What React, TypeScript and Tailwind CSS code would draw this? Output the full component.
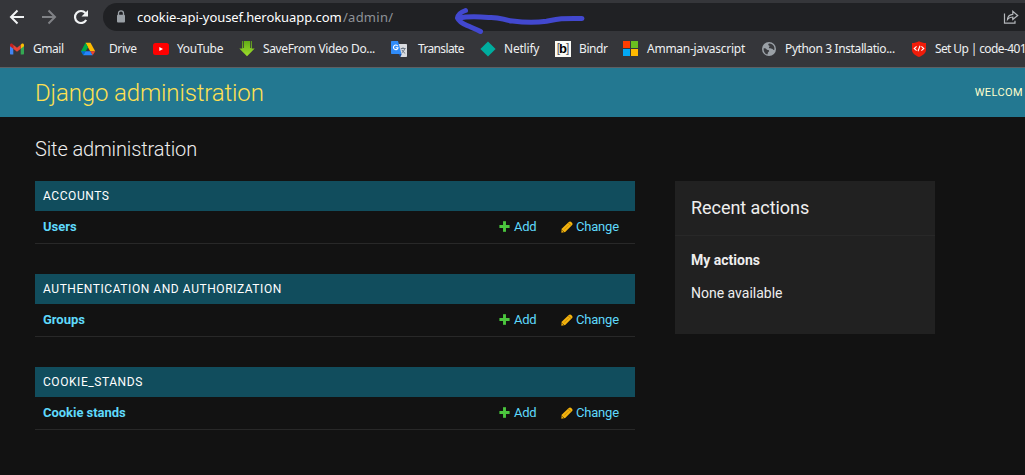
import React from "react";

const chromeFont = "font-['Noto_Sans',sans-serif]";

function GmailIcon() {
  return (
    <svg width="16" height="16" viewBox="0 0 16 16">
      <path d="M1 4.200v8.300c0 .6.4 1 1 1h2.300V7.300z" fill="#4285f4" />
      <path d="M15 4.200v8.300c0 .6-.4 1-1 1h-2.300V7.300z" fill="#34a853" />
      <path d="M11.700 3.800v4L15 5.300V4c0-1.400-1.500-2-2.500-1.100z" fill="#fbbc04" />
      <path d="M4.300 3.800v4L1 5.300V4c0-1.400 1.500-2 2.500-1.100z" fill="#c5221f" />
      <path d="M4.300 7.800v-4L8 6.700l3.700-2.900v4L8 10.700z" fill="#ea4335" />
    </svg>
  );
}

function DriveIcon() {
  return (
    <svg width="16" height="16" viewBox="0 0 16 16">
      <path d="M5.500 1.800h5L8 6.300z" fill="#00832d" />
      <path d="M10.500 1.800l4.700 8.500h-5L5.500 1.800z" fill="#ffba00" />
      <path d="M5.500 1.800L8 6.300l-4.700 7.900L1 10.300z" fill="#00ac47" />
      <path d="M1 10.300h4.700L3.300 14.200z" fill="#0066da" />
      <path d="M5.700 10.300h4.600l2.400 3.900H3.300z" fill="#2684fc" />
      <path d="M10.300 10.300h5l-2.600 3.900z" fill="#ea4335" />
    </svg>
  );
}

function YouTubeIcon() {
  return (
    <svg width="16" height="16" viewBox="0 0 16 16">
      <rect y="2" width="16" height="12" rx="2.500" fill="#f00" />
      <path d="M6.300 5.900v4.200L10 8z" fill="#fff" />
    </svg>
  );
}

function SaveFromIcon() {
  return (
    <svg width="16" height="16" viewBox="0 0 16 16">
      <defs>
        <linearGradient id="sf" x1="0" y1="0" x2="0" y2="1">
          <stop offset="0" stopColor="#62ad16" />
          <stop offset="1" stopColor="#a0e02c" />
        </linearGradient>
      </defs>
      <path d="M2.200 0h1v7.500H.3L8 15.300l7.700-7.800h-2.900V0h1v0h-2v7h-.8V0H5v7h-.8V0z" fill="url(#sf)" />
    </svg>
  );
}

function TranslateIcon() {
  return (
    <svg width="16" height="16" viewBox="0 0 16 16">
      <path d="M6 3h9c.6 0 1 .4 1 1v11c0 .6-.4 1-1 1H9.500z" fill="#dadce0" />
      <path d="M7.500 13h3.200L9.500 16z" fill="#174ea6" />
      <path d="M1 0h6l3.500 13H1c-.6 0-1-.4-1-1V1c0-.6.4-1 1-1z" fill="#2f8bf8" />
      <path d="M6.700 5.100A2.300 2.300 0 1 0 7 6.800H4.700" fill="none" stroke="#fff" strokeWidth="1.100" />
      <path d="M9.800 7.500h4.800M12 6.300v1.200M13.700 7.500c-.5 2.200-1.700 3.500-3 4.500M10.800 8.800c.8 1.500 1.900 2.600 3.400 3.600" fill="none" stroke="#6b7785" strokeWidth="1" />
    </svg>
  );
}

function NetlifyIcon() {
  return (
    <svg width="16" height="16" viewBox="0 0 16 16">
      <path d="M8 .4L15.600 8 8 15.600.4 8z" fill="#00ad9f" />
    </svg>
  );
}

function BindrIcon() {
  return (
    <span className="flex h-4 w-4 items-center justify-center bg-[#fbfbf6] font-['Liberation_Sans',sans-serif] text-[12px] leading-4 text-[#555]">
      <span className="-mt-0.5">[</span>
      <span className="-mx-px text-[13px] font-bold text-black">b</span>
      <span className="-mt-0.5">]</span>
    </span>
  );
}

function MicrosoftIcon() {
  return (
    <span className="-mt-px grid h-[15px] w-[15px] grid-cols-2 gap-px">
      <span className="bg-[#ff3d00]" />
      <span className="bg-[#6abf20]" />
      <span className="bg-[#03a9f4]" />
      <span className="bg-[#ffb900]" />
    </span>
  );
}

function GlobeIcon() {
  return (
    <svg width="16" height="16" viewBox="0 0 16 16">
      <circle cx="8" cy="8" r="7" fill="#9aa0a6" />
      <path d="M2.600 7.400c1.400-.2 2.300.1 3.200 1.100.8.800 2.300.3 2.300 1.500 0 1-1.300 1-1.300 2.200 0 .7-.2 1.200-.6 1.300C3.700 12.600 2.400 10.400 2.600 7.400zM8 2.600c2-.2 3.800.8 4.900 2.600.6 1.200.7 2.500.4 3.800-.9.200-1.400-1-2.400-1.300C9.600 7.300 8.600 7.500 8 6.700c-.3-.7.8-1 .6-1.600-.2-.7-1.300-.5-1.400-1.200 0-.5.300-1 .8-1.300z" fill="#3a3b3f" />
    </svg>
  );
}

function ShieldIcon() {
  return (
    <svg width="16" height="16" viewBox="0 0 16 16">
      <path d="M8 .2c2 1.200 4.500 1.700 7 1.800v7.200c0 3-3.500 5.300-7 6.800-3.500-1.500-7-3.800-7-6.800V2C3.500 1.900 6 1.400 8 .2z" fill="#f01c0a" />
      <path d="M5.600 5.300L3.200 7.500l2.400 2.200M10.400 5.300l2.400 2.200-2.400 2.200M9 4.700L7 10.300" fill="none" stroke="#fff" strokeWidth="1.100" />
    </svg>
  );
}

const bookmarks = [
  { label: "Gmail", icon: <GmailIcon />, box: "w-[71px]", text: "ml-2 tracking-[-0.45px]" },
  { label: "Drive", icon: <DriveIcon />, box: "w-[73px]", text: "ml-[13px] tracking-[-0.4px]" },
  { label: "YouTube", icon: <YouTubeIcon />, box: "w-[86px]", text: "ml-2 tracking-[-0.35px]" },
  { label: "SaveFrom Video Do...", icon: <SaveFromIcon />, box: "w-[152px]", text: "ml-2 tracking-[-0.37px]" },
  { label: "Translate", icon: <TranslateIcon />, box: "w-[89px]", text: "ml-[11px] tracking-[-0.65px]" },
  { label: "Netlify", icon: <NetlifyIcon />, box: "w-[75px]", text: "ml-2 tracking-[-0.2px]" },
  { label: "Bindr", icon: <BindrIcon />, box: "w-[68px]", text: "ml-2 tracking-[-0.4px]" },
  { label: "Amman-javascript", icon: <MicrosoftIcon />, box: "w-[138px]", text: "ml-2 tracking-[-0.25px]" },
  { label: "Python 3 Installatio...", icon: <GlobeIcon />, box: "w-[150px]", text: "ml-2 tracking-[-0.38px]" },
  { label: "Set Up | code-401", icon: <ShieldIcon />, box: "w-[114px]", text: "ml-2 tracking-[-0.62px]" },
];

function BrowserBar() {
  return (
    <div className={`relative h-[68px] border-b border-[#5d6063] bg-[#35363a] pt-[3px] ${chromeFont}`}>
      <div className="flex h-7 items-center">
        <div className="flex w-[103px] shrink-0 items-center pl-[9px]">
          <svg width="16" height="16" viewBox="0 0 16 16" fill="none" stroke="#f1f3f4" strokeWidth="2">
            <path d="M15 8H2.500M8.500 1.500L2 8l6.500 6.500" />
          </svg>
          <svg className="ml-4" width="16" height="16" viewBox="0 0 16 16" fill="none" stroke="#808286" strokeWidth="2">
            <path d="M1 8h12.500M7.500 1.500L14 8l-6.500 6.500" />
          </svg>
          <svg className="ml-4" width="16" height="16" viewBox="0 0 16 16">
            <path d="M13.200 11A6 6 0 1 1 12.500 4" fill="none" stroke="#f1f3f4" strokeWidth="2.200" />
            <path d="M15 1v6.500H8.500z" fill="#f1f3f4" />
          </svg>
        </div>
        <div className="flex h-7 flex-1 items-center rounded-l-full bg-[#202124] pl-[13px]">
          <svg className="-mt-px" width="10" height="13" viewBox="0 0 10 13">
            <path d="M2.500 5.500V3.300a2.500 2.500 0 0 1 5 0v2.200" fill="none" stroke="#9aa0a6" strokeWidth="1.300" />
            <rect x="1" y="4.800" width="8" height="7.700" rx="1" fill="#9aa0a6" />
          </svg>
          <span className="ml-[11px] w-[206px] whitespace-nowrap text-[13px] leading-5 tracking-[-0.07px] text-white">cookie-api-yousef.herokuapp.com</span>
          <span className="whitespace-nowrap text-[13px] leading-5 tracking-[0.25px] text-[#8f9398]">/admin/</span>
          <svg className="ml-auto mr-1.5" width="16" height="16" viewBox="0 0 16 16" fill="none" stroke="#b4b7bb" strokeWidth="1.200">
            <path d="M1.500 4.500v9.700h10.500v-2.500" />
            <path d="M4.500 10.500c.3-3.200 2-5 5.300-5.200V2.300L14.700 6.500 9.800 10.500V8c-2.400 0-4 .8-5.300 2.500z" />
          </svg>
        </div>
      </div>
      <div className="flex h-9 items-center overflow-hidden pl-[9px] text-[12px] leading-4 text-[#eef0f2]">
        {bookmarks.map((b) => (
          <div key={b.label} className={`flex shrink-0 items-center ${b.box}`}>
            <span className="flex h-4 w-4 shrink-0 items-center">{b.icon}</span>
            <span className={`whitespace-nowrap ${b.text}`}>{b.label}</span>
          </div>
        ))}
      </div>
      <svg className="absolute left-[450px] top-0" width="140" height="40" viewBox="450 0 140 40" fill="none" stroke="#4248cf" strokeWidth="5" strokeLinecap="round" strokeLinejoin="round">
        <path d="M465.500 10.500C461 12 458 15 457.500 18c1.500 3.500 5 5.500 9.500 7.500 5 2.200 9 3.500 13.500 6" />
        <path d="M458.500 18c8-1.500 20-1.500 30-.5 12-.8 14 2.500 24 3.600 12 1.500 26 1.300 34 .2 10-2 14-3.300 35.500-2.800" />
      </svg>
    </div>
  );
}

function Module({ title, model }: { title: string; model: string }) {
  return (
    <section className="mb-[30px]">
      <h2 className="h-[30px] bg-[#114d5d] px-2 text-[12px] font-normal leading-[30px] tracking-[0.56px] text-white">{title}</h2>
      <div className="flex h-[33px] items-center border-b border-[#282828] text-[13px] leading-4 text-[#5fd9fb]">
        <span className="flex-1 pl-2 font-bold tracking-[-0.03px]">{model}</span>
        <span className="flex w-[62px] items-center">
          <svg className="-mt-px" width="11" height="11" viewBox="0 0 11 11">
            <path d="M5.500 0v11M0 5.500h11" stroke="#2f7d28" strokeWidth="3" />
            <path d="M5.500 .5v10M1 5.500h9" stroke="#4cc63e" strokeWidth="2.800" />
          </svg>
          <span className="ml-1 tracking-[-0.3px]">Add</span>
        </span>
        <span className="flex w-[74px] items-center">
          <svg className="-mt-px" width="12" height="12" viewBox="0 0 12 12">
            <path d="M.3 11.700L.7 7.800 7.800.9Q8.900 0 9.900.8l1.300 1.300q.8.900 0 1.900L4.200 11.100z" fill="#f5b40d" />
            <path d="M7.400 1.900l2.700 2.700" stroke="#92680a" strokeWidth=".8" />
            <path d="M3.200 8.500l4.300-4.300" stroke="#b37c08" strokeWidth=".7" />
            <path d="M1.300 9.400l1.400 1.400" stroke="#3a2c08" strokeWidth=".9" />
          </svg>
          <span className="ml-[3px] tracking-[-0.2px]">Change</span>
        </span>
      </div>
    </section>
  );
}

export default function App() {
  return (
    <div className="h-[475px] w-[1025px] overflow-hidden bg-[#121212] font-['Roboto',sans-serif]">
      <BrowserBar />
      <header className="flex h-[49px] items-center justify-between bg-[#237891] pl-[35px] pr-0.5">
        <h1 className="text-[24px] font-light leading-8 tracking-[-0.13px] text-[#ffe052]">Django administration</h1>
        <span className="text-[11px] leading-4 tracking-[0.4px] text-[#ffffcc]">WELCOM</span>
      </header>
      <main className="pl-[35px] pt-5">
        <h2 className="mb-5 text-[20px] font-light leading-6 tracking-[-0.12px] text-[#eee]">Site administration</h2>
        <div className="flex items-start gap-10">
          <div className="w-[600px]">
            <Module title="ACCOUNTS" model="Users" />
            <Module title="AUTHENTICATION AND AUTHORIZATION" model="Groups" />
            <Module title="COOKIE_STANDS" model="Cookie stands" />
          </div>
          <aside className="h-[153px] w-[260px] bg-[#212121] text-[#eee]">
            <h2 className="h-[55px] border-b border-[#282828] px-4 text-[18px] leading-[54px] tracking-[-0.05px]">Recent actions</h2>
            <h3 className="mt-4 px-4 text-[14px] font-bold leading-4">My actions</h3>
            <p className="mt-[17px] px-4 text-[14px] leading-4">None available</p>
          </aside>
        </div>
      </main>
    </div>
  );
}
